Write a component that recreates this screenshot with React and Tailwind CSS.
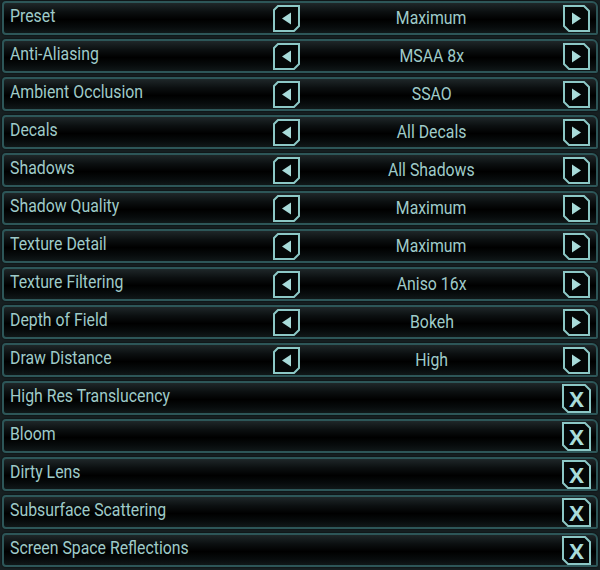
import React from "react";

const rows = [
  ["Preset", "Maximum"],
  ["Anti-Aliasing", "MSAA 8x"],
  ["Ambient Occlusion", "SSAO"],
  ["Decals", "All Decals"],
  ["Shadows", "All Shadows"],
  ["Shadow Quality", "Maximum"],
  ["Texture Detail", "Maximum"],
  ["Texture Filtering", "Aniso 16x"],
  ["Depth of Field", "Bokeh"],
  ["Draw Distance", "High"],
  ["High Res Translucency", null],
  ["Bloom", null],
  ["Dirty Lens", null],
  ["Subsurface Scattering", null],
  ["Screen Space Reflections", null],
];

function ArrowBtn({ dir }) {
  const left = dir === "left";
  const pts = left
    ? "5,1 26,1 26,21 21,26 1,26 1,5"
    : "1,1 21,1 26,6 26,26 6,26 1,21";
  const tri = left ? "9,13.5 18,7.5 18,19.5" : "18,13.5 9,7.5 9,19.5";
  return (
    <svg width="27" height="27" viewBox="0 0 27 27" className="shrink-0">
      <polygon points={pts} fill="#040707" stroke="#8cc8c6" strokeWidth="2" />
      <polygon points={tri} fill="#a9dcda" />
    </svg>
  );
}

function XBtn() {
  return (
    <div className="relative w-[29px] h-[29px] shrink-0">
      <svg width="29" height="29" viewBox="0 0 29 29" className="absolute inset-0">
        <polygon points="1,1 23,1 28,6 28,28 6,28 1,23" fill="#040707" stroke="#8cc8c6" strokeWidth="2" />
      </svg>
      <div className="absolute inset-0 flex items-center justify-center text-[22px] font-bold text-[#a9dcda] leading-none" style={{ fontFamily: '"Open Sans", sans-serif' }}>
        X
      </div>
    </div>
  );
}

export default function App() {
  return (
    <div
      className="w-[600px] h-[570px] bg-[#172022] flex flex-col overflow-hidden"
      style={{ fontFamily: 'Roboto, "Liberation Sans", sans-serif' }}
    >
      {rows.map(([label, value], i) => (
        <div key={i} className="h-[38px] shrink-0 pt-[1px] pb-[3px] px-[2px]">
          <div className="h-[34px] flex items-center rounded-tl-[4px] rounded-tr-[6px] rounded-bl-[4px] rounded-br-[2px] border-2 border-[#2d5658] bg-[linear-gradient(to_bottom,#1f2729_0%,#0b0f10_30%,#000000_55%,#070b0c_80%,#101819_100%)] shadow-[0_0_2px_#000]">
            <div className="pl-[6px] flex-1 leading-none pb-[4px]">
              <span className="inline-block origin-left scale-x-[0.88] text-[18px] text-[#9fcbc9] whitespace-nowrap">
                {label}
              </span>
            </div>
            {value !== null ? (
              <div className="flex items-center w-[323px] pr-[6px]">
                <ArrowBtn dir="left" />
                <div className="flex-1 text-center leading-none">
                  <span className="inline-block origin-center scale-x-[0.88] text-[18px] text-[#9fcbc9] whitespace-nowrap">
                    {value}
                  </span>
                </div>
                <ArrowBtn dir="right" />
              </div>
            ) : (
              <div className="pr-[5px]">
                <XBtn />
              </div>
            )}
          </div>
        </div>
      ))}
    </div>
  );
}
